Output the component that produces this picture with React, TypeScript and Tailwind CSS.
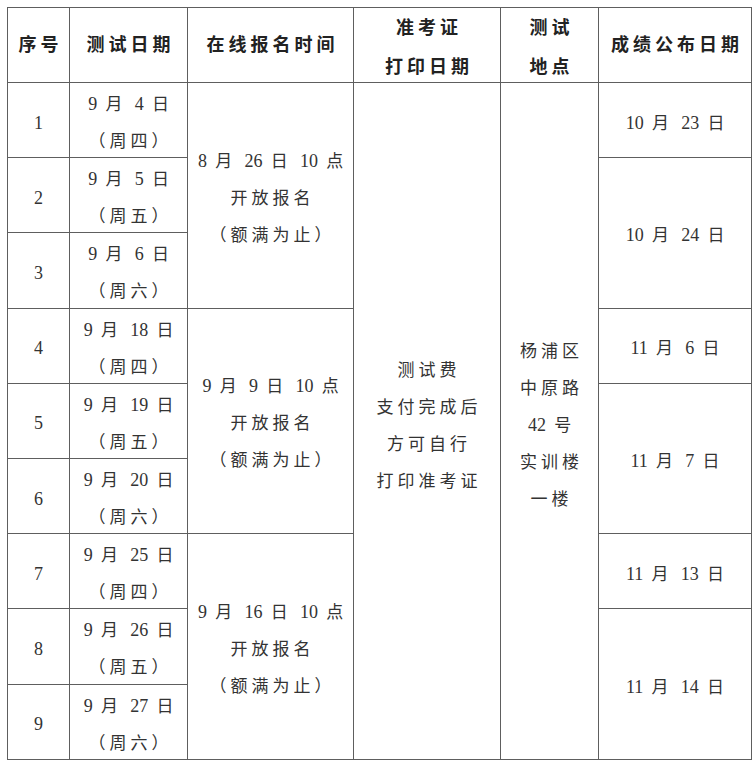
const font = { fontFamily: '"Liberation Serif", "Noto Sans CJK SC", serif' };

type Row = {
  no: string;
  date: string;
  week: string;
  signup?: { text: string; span: number };
  result?: { text: string; span: number };
};

const rows: Row[] = [
  { no: "1", date: "9 月 4 日", week: "（周四）", signup: { text: "8 月 26 日 10 点", span: 3 }, result: { text: "10 月 23 日", span: 1 } },
  { no: "2", date: "9 月 5 日", week: "（周五）", result: { text: "10 月 24 日", span: 2 } },
  { no: "3", date: "9 月 6 日", week: "（周六）" },
  { no: "4", date: "9 月 18 日", week: "（周四）", signup: { text: "9 月 9 日 10 点", span: 3 }, result: { text: "11 月 6 日", span: 1 } },
  { no: "5", date: "9 月 19 日", week: "（周五）", result: { text: "11 月 7 日", span: 2 } },
  { no: "6", date: "9 月 20 日", week: "（周六）" },
  { no: "7", date: "9 月 25 日", week: "（周四）", signup: { text: "9 月 16 日 10 点", span: 3 }, result: { text: "11 月 13 日", span: 1 } },
  { no: "8", date: "9 月 26 日", week: "（周五）", result: { text: "11 月 14 日", span: 2 } },
  { no: "9", date: "9 月 27 日", week: "（周六）" },
];

// digits keep normal spacing, CJK gets the wide tracking
function T({ s }: { s: string }) {
  return (
    <div className="whitespace-nowrap">
      {s.split(/(\d+)/).map((p, i) =>
        /^\d+$/.test(p) ? (
          <span key={i} className="tracking-normal text-[18px]">{p}</span>
        ) : (
          <span key={i}>{p}</span>
        )
      )}
    </div>
  );
}

// zero-height box so the lines centre on it without growing the row
function Lines({ children }: { children: React.ReactNode }) {
  return <div className="flex flex-col justify-center h-0">{children}</div>;
}

const cell = "border border-[#5e5e5e] text-center align-middle";
const th = cell + " p-0 text-[18px] font-bold text-[#222] tracking-[4px] pl-[4px] leading-[39px]";
const td = cell + " p-0 pt-[6px] pl-[4px] text-[17px] text-[#333] tracking-[4px] leading-[37px]";

export default function App() {
  return (
    <div className="w-[756px] h-[768px] bg-white pt-[7px] pl-[7px]" style={font}>
      <table className="border-collapse table-fixed w-[744px]">
        <colgroup>
          <col className="w-[62px]" />
          <col className="w-[118px]" />
          <col className="w-[166px]" />
          <col className="w-[147px]" />
          <col className="w-[98px]" />
          <col className="w-[153px]" />
        </colgroup>
        <thead>
          <tr className="h-[75px]">
            <th className={th}>
              <Lines>序号</Lines>
            </th>
            <th className={th}>
              <Lines>测试日期</Lines>
            </th>
            <th className={th}>
              <Lines>在线报名时间</Lines>
            </th>
            <th className={th + " pt-[6px]"}>
              <Lines>
                <div>准考证</div>
                <div>打印日期</div>
              </Lines>
            </th>
            <th className={th + " pt-[6px]"}>
              <Lines>
                <div>测试</div>
                <div>地点</div>
              </Lines>
            </th>
            <th className={th}>
              <Lines>成绩公布日期</Lines>
            </th>
          </tr>
        </thead>
        <tbody>
          {rows.map((r, i) => (
            <tr key={r.no} className="h-[75.2px]">
              <td className={td + " text-[18px]"}>
                <Lines>{r.no}</Lines>
              </td>
              <td className={td}>
                <Lines>
                  <T s={r.date} />
                  <div>{r.week}</div>
                </Lines>
              </td>
              {r.signup && (
                <td className={td} rowSpan={r.signup.span}>
                  <Lines>
                    <T s={r.signup.text} />
                    <div>开放报名</div>
                    <div>（额满为止）</div>
                  </Lines>
                </td>
              )}
              {i === 0 && (
                <>
                  <td className={td + " pt-[10px]"} rowSpan={9}>
                    <Lines>
                      <div>测试费</div>
                      <div>支付完成后</div>
                      <div>方可自行</div>
                      <div>打印准考证</div>
                    </Lines>
                  </td>
                  <td className={td + " pt-[10px]"} rowSpan={9}>
                    <Lines>
                      <div>杨浦区</div>
                      <div>中原路</div>
                      <T s="42 号" />
                      <div>实训楼</div>
                      <div>一楼</div>
                    </Lines>
                  </td>
                </>
              )}
              {r.result && (
                <td className={td} rowSpan={r.result.span}>
                  <Lines>
                    <T s={r.result.text} />
                  </Lines>
                </td>
              )}
            </tr>
          ))}
        </tbody>
      </table>
    </div>
  );
}
